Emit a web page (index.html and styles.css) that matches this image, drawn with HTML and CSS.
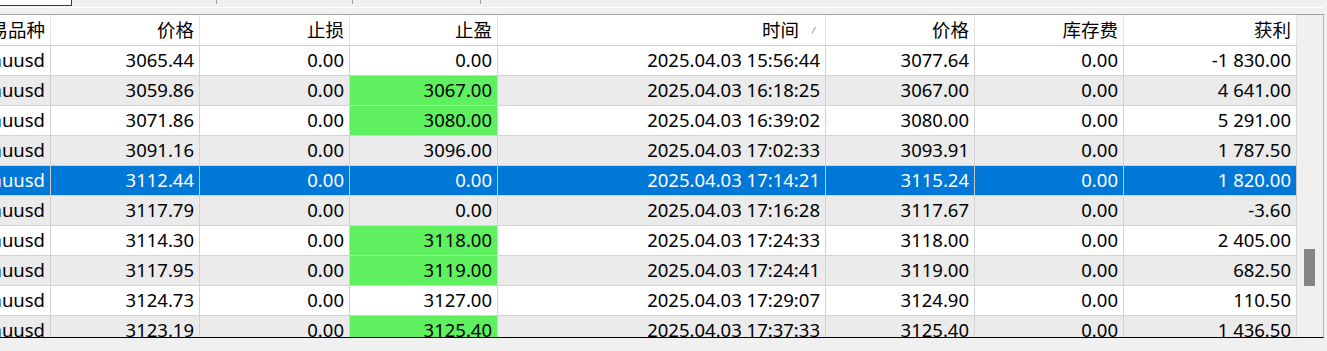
FILE: index.html
```html
<!DOCTYPE html>
<html lang="zh">
<head>
<meta charset="utf-8">
<title>交易历史</title>
<link rel="stylesheet" href="styles.css">
</head>
<body>
<div class="tabbar">
  <div class="tab"></div>
  <span class="sep sep1"></span>
  <span class="sep sep2"></span>
  <span class="sep sep3"></span>
</div>
<div class="hline"></div>
<div class="frame">
  <div class="table">
    <div class="row head">
      <div class="c">交易品种</div>
      <div class="c">价格</div>
      <div class="c">止损</div>
      <div class="c">止盈</div>
      <div class="c sorted"><span>时间</span><svg class="sort" width="6" height="8" viewBox="0 0 6 8"><path d="M1 7.5 L4.5 1" stroke="#8c8c8c" stroke-width="1"/></svg></div>
      <div class="c">价格</div>
      <div class="c">库存费</div>
      <div class="c">获利</div>
    </div>
    <div class="row">
      <div class="c">xauusd</div><div class="c">3065.44</div><div class="c">0.00</div><div class="c">0.00</div><div class="c">2025.04.03 15:56:44</div><div class="c">3077.64</div><div class="c">0.00</div><div class="c">-1 830.00</div>
    </div>
    <div class="row alt">
      <div class="c">xauusd</div><div class="c">3059.86</div><div class="c">0.00</div><div class="c g">3067.00</div><div class="c">2025.04.03 16:18:25</div><div class="c">3067.00</div><div class="c">0.00</div><div class="c">4 641.00</div>
    </div>
    <div class="row">
      <div class="c">xauusd</div><div class="c">3071.86</div><div class="c">0.00</div><div class="c g">3080.00</div><div class="c">2025.04.03 16:39:02</div><div class="c">3080.00</div><div class="c">0.00</div><div class="c">5 291.00</div>
    </div>
    <div class="row alt">
      <div class="c">xauusd</div><div class="c">3091.16</div><div class="c">0.00</div><div class="c">3096.00</div><div class="c">2025.04.03 17:02:33</div><div class="c">3093.91</div><div class="c">0.00</div><div class="c">1 787.50</div>
    </div>
    <div class="row sel">
      <div class="c">xauusd</div><div class="c">3112.44</div><div class="c">0.00</div><div class="c">0.00</div><div class="c">2025.04.03 17:14:21</div><div class="c">3115.24</div><div class="c">0.00</div><div class="c">1 820.00</div>
    </div>
    <div class="row alt">
      <div class="c">xauusd</div><div class="c">3117.79</div><div class="c">0.00</div><div class="c">0.00</div><div class="c">2025.04.03 17:16:28</div><div class="c">3117.67</div><div class="c">0.00</div><div class="c">-3.60</div>
    </div>
    <div class="row">
      <div class="c">xauusd</div><div class="c">3114.30</div><div class="c">0.00</div><div class="c g">3118.00</div><div class="c">2025.04.03 17:24:33</div><div class="c">3118.00</div><div class="c">0.00</div><div class="c">2 405.00</div>
    </div>
    <div class="row alt">
      <div class="c">xauusd</div><div class="c">3117.95</div><div class="c">0.00</div><div class="c g">3119.00</div><div class="c">2025.04.03 17:24:41</div><div class="c">3119.00</div><div class="c">0.00</div><div class="c">682.50</div>
    </div>
    <div class="row">
      <div class="c">xauusd</div><div class="c">3124.73</div><div class="c">0.00</div><div class="c">3127.00</div><div class="c">2025.04.03 17:29:07</div><div class="c">3124.90</div><div class="c">0.00</div><div class="c">110.50</div>
    </div>
    <div class="row alt">
      <div class="c">xauusd</div><div class="c">3123.19</div><div class="c">0.00</div><div class="c g">3125.40</div><div class="c">2025.04.03 17:37:33</div><div class="c">3125.40</div><div class="c">0.00</div><div class="c">1 436.50</div>
    </div>
  </div>
  <div class="vscroll"><div class="thumb"></div></div>
</div>
</body>
</html>
```

FILE: styles.css
```css
html, body {
  margin: 0;
  padding: 0;
}
body {
  width: 1327px;
  height: 351px;
  overflow: hidden;
  background: #f0f0f0;
  font-family: "Noto Sans", "Noto Sans CJK SC", sans-serif;
  font-size: 18.5px;
  color: #000;
}
.tabbar {
  height: 7px;
  display: flex;
  align-items: flex-start;
}
.tab {
  width: 71px;
  height: 5px;
  background: #fff;
  border-right: 1px solid #3c3c3c;
  border-bottom: 1px solid #3c3c3c;
}
.sep {
  width: 1px;
  height: 4px;
  background: #a0a0a0;
}
.sep1 { margin-left: 144px; }
.sep2 { margin-left: 135px; }
.sep3 { margin-left: 127px; }
.hline {
  height: 1px;
  width: 1323px;
  background: #fff;
  margin-bottom: 6px;
}
.frame {
  width: 1323px;
  height: 322px;
  border-top: 1px solid #a0a0a0;
  border-right: 1px solid #b4b4b4;
  border-bottom: 1px solid #000;
  display: flex;
  overflow: hidden;
}
.table {
  width: 1297px;
  flex: none;
  overflow: hidden;
}
.row {
  display: grid;
  grid-template-columns: 101px 149px 150px 148px 328px 149px 149px 173px;
  margin-left: -50px;
  height: 30px;
  background: #fff;
}
.row.alt { background: #ebebeb; }
.row.sel { background: #0078d7; color: #fff; }
.c {
  box-sizing: border-box;
  border-right: 1px solid #d2d2d2;
  border-bottom: 1px solid #d2d2d2;
  padding-right: 5px;
  display: flex;
  align-items: center;
  justify-content: flex-end;
  white-space: nowrap;
  line-height: 1;
}
.row.sel .c { border-right-color: #c8c8c8; border-bottom-color: #d2d2d2; }
.c.g { background: #5ef05e; }
.head {
  height: 31px;
}
.head .c {
  border-right-color: #e3e3e3;
  border-bottom-color: #cccccc;
  padding-top: 1px;
}
.head .sorted { padding-right: 8px; }
.sort { margin-left: 12px; margin-bottom: 2px; }
.vscroll {
  width: 26px;
  flex: none;
  background: #f0f0f0;
}
.thumb {
  margin-top: 234px;
  margin-left: 7px;
  width: 11px;
  height: 37px;
  background: #858585;
}
```
